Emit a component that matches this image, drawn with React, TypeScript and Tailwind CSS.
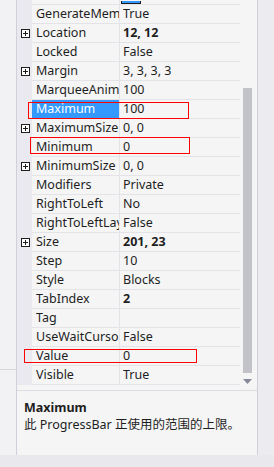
const rows: { name: string; value: string; plus?: boolean; bold?: boolean; selected?: boolean }[] = [
	{ name: "GenerateMember", value: "True" },
	{ name: "Location", value: "12, 12", plus: true, bold: true },
	{ name: "Locked", value: "False" },
	{ name: "Margin", value: "3, 3, 3, 3", plus: true },
	{ name: "MarqueeAnimationSpeed", value: "100" },
	{ name: "Maximum", value: "100", selected: true },
	{ name: "MaximumSize", value: "0, 0", plus: true },
	{ name: "Minimum", value: "0" },
	{ name: "MinimumSize", value: "0, 0", plus: true },
	{ name: "Modifiers", value: "Private" },
	{ name: "RightToLeft", value: "No" },
	{ name: "RightToLeftLayout", value: "False" },
	{ name: "Size", value: "201, 23", plus: true, bold: true },
	{ name: "Step", value: "10" },
	{ name: "Style", value: "Blocks" },
	{ name: "TabIndex", value: "2", bold: true },
	{ name: "Tag", value: "" },
	{ name: "UseWaitCursor", value: "False" },
	{ name: "Value", value: "0" },
	{ name: "Visible", value: "True" },
];

function PlusBox() {
	return (
		<div className="flex h-[9px] w-[9px] items-center justify-center border border-[#1e1e1e] bg-white">
			<svg width="7" height="7" viewBox="0 0 7 7">
				<path d="M1 3.5h5M3.5 1v5" stroke="#1e1e1e" strokeWidth="1" />
			</svg>
		</div>
	);
}

function Row({ r }: { r: (typeof rows)[number] }) {
	return (
		<div className="flex h-[19px] shrink-0">
			<div className="flex w-[15px] shrink-0 items-center justify-center bg-[#e9e9ef] pl-[1px]">
				{r.plus && <PlusBox />}
			</div>
			<div
				className={`w-[88px] shrink-0 overflow-hidden border-b border-r border-[#e4e4e8] pl-[4px] ${
					r.selected ? "bg-[#3399ff] text-white" : "text-[#1e1e1e]"
				}`}
			>
				<span className="block overflow-hidden whitespace-nowrap leading-[18px]">{r.name}</span>
			</div>
			<div
				className={`min-w-0 flex-1 overflow-hidden border-b border-[#e4e4e8] pl-[3px] text-[#1e1e1e] ${
					r.bold ? "font-bold" : ""
				}`}
			>
				<span className="block overflow-hidden whitespace-nowrap leading-[18px]">{r.value}</span>
			</div>
		</div>
	);
}

export default function App() {
	return (
		<div
			className="relative flex h-[467px] w-[274px] flex-col overflow-hidden bg-[#ebebf0] text-[12.5px]"
			style={{ fontFamily: '"Noto Sans", "Noto Sans CJK SC", sans-serif' }}
		>
			<div className="flex h-[455px] shrink-0">
				{/* left strip */}
				<div className="flex w-[16px] shrink-0 flex-col bg-[#f2f2f4]">
					<div className="h-[370px] border-b border-[#d6d6dc]" />
				</div>

				{/* property panel */}
				<div className="flex w-[242px] shrink-0 flex-col border-x border-[#cfd0da] bg-[#f5f5f5]">
					<div className="flex h-[390px] shrink-0 overflow-hidden">
						<div className="flex w-[223px] shrink-0 flex-col">
							{/* partial row above */}
							<div className="flex h-[5px] shrink-0">
								<div className="w-[15px] shrink-0 bg-[#e9e9ef]" />
								<div className="w-[88px] shrink-0 border-b border-r border-[#e4e4e8]" />
								<div className="flex flex-1 items-end border-b border-[#e4e4e8] pl-[1px]">
									<div className="h-[3px] w-[20px] border-x border-b border-[#1e1e1e] bg-[#3399ff]" />
								</div>
							</div>
							{rows.map((r) => (
								<Row key={r.name} r={r} />
							))}
						</div>
						{/* scrollbar */}
						<div className="flex flex-1 flex-col items-center pl-[3px] pr-[5px]">
							<div className="mt-[88px] h-[285px] w-[9px] bg-[#c2c3c9]" />
							<svg width="9" height="6" viewBox="0 0 9 6" className="mt-[6px]">
								<path d="M0 0h9L4.5 5z" fill="#868999" />
							</svg>
						</div>
					</div>
					<div className="flex flex-1 flex-col border-t border-[#dcdce2] px-[7px] pt-[8px]">
						<div className="font-bold leading-[17px] text-[#1e1e1e]">Maximum</div>
						<div className="leading-[17px] text-[#1e1e1e]">此 ProgressBar 正使用的范围的上限。</div>
					</div>
				</div>

				<div className="flex-1 bg-[#ebebf0]" />
			</div>
			<div className="flex-1 bg-[#e8e8ed]" />

			{/* red annotation boxes */}
			<div className="absolute left-[28px] top-[102px] h-[17px] w-[161px] border border-[#ff0000]" />
			<div className="absolute left-[30px] top-[137px] h-[17px] w-[160px] border border-[#ff0000]" />
			<div className="absolute left-[24px] top-[349px] h-[14px] w-[173px] border border-[#ff0000]" />
		</div>
	);
}
